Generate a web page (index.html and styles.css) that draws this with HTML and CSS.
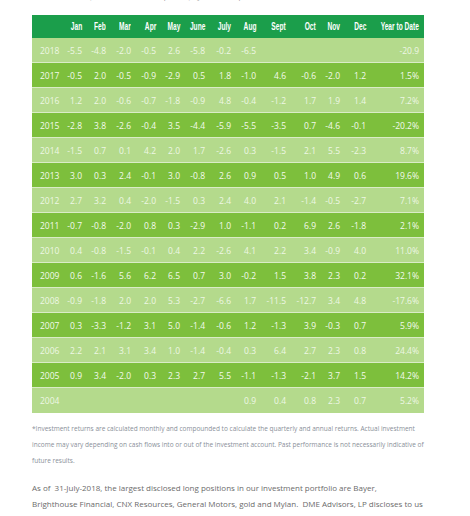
FILE: index.html
```html
<!DOCTYPE html>
<html lang="en">
<head>
  <meta charset="UTF-8" />
  <meta name="viewport" content="width=device-width, initial-scale=1.0"/>
  <title>Monthly Returns</title>
  <link rel="stylesheet" href="styles.css">
</head>
<body>

  <div class="page">
    <p class="intro">Returns (net of all fees and expenses) by month, in percent</p>

    <table class="returns">
      <colgroup>
        <col class="c-year"><col class="c25"><col class="c24"><col class="c25"><col class="c25"><col class="c24"><col class="c25"><col class="c26"><col class="c25"><col class="c30"><col class="c30"><col class="c24"><col class="c26"><col class="c-ytd">
      </colgroup>
      <thead>
        <tr>
          <th></th>
          <th><span>Jan</span></th><th><span>Feb</span></th><th><span>Mar</span></th><th><span>Apr</span></th>
          <th><span>May</span></th><th><span>June</span></th><th><span>July</span></th><th><span>Aug</span></th>
          <th><span>Sept</span></th><th><span>Oct</span></th><th><span>Nov</span></th><th><span>Dec</span></th>
          <th><span>Year to Date</span></th>
        </tr>
      </thead>
      <tbody>
        <tr><td>2018</td><td>-5.5</td><td>-4.8</td><td>-2.0</td><td>-0.5</td><td>2.6</td><td>-5.8</td><td>-0.2</td><td>-6.5</td><td></td><td></td><td></td><td></td><td>-20.9</td></tr>
        <tr><td>2017</td><td>-0.5</td><td>2.0</td><td>-0.5</td><td>-0.9</td><td>-2.9</td><td>0.5</td><td>1.8</td><td>-1.0</td><td>4.6</td><td>-0.6</td><td>-2.0</td><td>1.2</td><td>1.5%</td></tr>
        <tr><td>2016</td><td>1.2</td><td>2.0</td><td>-0.6</td><td>-0.7</td><td>-1.8</td><td>-0.9</td><td>4.8</td><td>-0.4</td><td>-1.2</td><td>1.7</td><td>1.9</td><td>1.4</td><td>7.2%</td></tr>
        <tr><td>2015</td><td>-2.8</td><td>3.8</td><td>-2.6</td><td>-0.4</td><td>3.5</td><td>-4.4</td><td>-5.9</td><td>-5.5</td><td>-3.5</td><td>0.7</td><td>-4.6</td><td>-0.1</td><td>-20.2%</td></tr>
        <tr><td>2014</td><td>-1.5</td><td>0.7</td><td>0.1</td><td>4.2</td><td>2.0</td><td>1.7</td><td>-2.6</td><td>0.3</td><td>-1.5</td><td>2.1</td><td>5.5</td><td>-2.3</td><td>8.7%</td></tr>
        <tr><td>2013</td><td>3.0</td><td>0.3</td><td>2.4</td><td>-0.1</td><td>3.0</td><td>-0.8</td><td>2.6</td><td>0.9</td><td>0.5</td><td>1.0</td><td>4.9</td><td>0.6</td><td>19.6%</td></tr>
        <tr><td>2012</td><td>2.7</td><td>3.2</td><td>0.4</td><td>-2.0</td><td>-1.5</td><td>0.3</td><td>2.4</td><td>4.0</td><td>2.1</td><td>-1.4</td><td>-0.5</td><td>-2.7</td><td>7.1%</td></tr>
        <tr><td>2011</td><td>-0.7</td><td>-0.8</td><td>-2.0</td><td>0.8</td><td>0.3</td><td>-2.9</td><td>1.0</td><td>-1.1</td><td>0.2</td><td>6.9</td><td>2.6</td><td>-1.8</td><td>2.1%</td></tr>
        <tr><td>2010</td><td>0.4</td><td>-0.8</td><td>-1.5</td><td>-0.1</td><td>0.4</td><td>2.2</td><td>-2.6</td><td>4.1</td><td>2.2</td><td>3.4</td><td>-0.9</td><td>4.0</td><td>11.0%</td></tr>
        <tr><td>2009</td><td>0.6</td><td>-1.6</td><td>5.6</td><td>6.2</td><td>6.5</td><td>0.7</td><td>3.0</td><td>-0.2</td><td>1.5</td><td>3.8</td><td>2.3</td><td>0.2</td><td>32.1%</td></tr>
        <tr><td>2008</td><td>-0.9</td><td>-1.8</td><td>2.0</td><td>2.0</td><td>5.3</td><td>-2.7</td><td>-6.6</td><td>1.7</td><td>-11.5</td><td>-12.7</td><td>3.4</td><td>4.8</td><td>-17.6%</td></tr>
        <tr><td>2007</td><td>0.3</td><td>-3.3</td><td>-1.2</td><td>3.1</td><td>5.0</td><td>-1.4</td><td>-0.6</td><td>1.2</td><td>-1.3</td><td>3.9</td><td>-0.3</td><td>0.7</td><td>5.9%</td></tr>
        <tr><td>2006</td><td>2.2</td><td>2.1</td><td>3.1</td><td>3.4</td><td>1.0</td><td>-1.4</td><td>-0.4</td><td>0.3</td><td>6.4</td><td>2.7</td><td>2.3</td><td>0.8</td><td>24.4%</td></tr>
        <tr><td>2005</td><td>0.9</td><td>3.4</td><td>-2.0</td><td>0.3</td><td>2.3</td><td>2.7</td><td>5.5</td><td>-1.1</td><td>-1.3</td><td>-2.1</td><td>3.7</td><td>1.5</td><td>14.2%</td></tr>
        <tr><td>2004</td><td></td><td></td><td></td><td></td><td></td><td></td><td></td><td>0.9</td><td>0.4</td><td>0.8</td><td>2.3</td><td>0.7</td><td>5.2%</td></tr>
      </tbody>
    </table>

    <p class="note">*Investment returns are calculated monthly and compounded to calculate the quarterly and annual returns. Actual investment income may vary depending on cash flows into or out of the investment account. Past performance is not necessarily indicative of future results.</p>

    <p class="holdings">As of &nbsp;31-July-2018, the largest disclosed long positions in our investment portfolio are Bayer,<br>Brighthouse Financial, CNX Resources, General Motors, gold and Mylan. &nbsp;DME Advisors, LP discloses to us</p>
  </div>

</body>
</html>
```

FILE: styles.css
```css
body {
  margin: 0;
  font-family: 'Open Sans', sans-serif;
  background: #fff;
  color: #666;
  overflow: hidden;
}

.page {
  width: 392px;
  padding-left: 32px;
}

.intro {
  margin: -9px 0 0 28px;
  height: 11px;
  font-size: 7.5px;
  line-height: 11px;
  color: #999;
}

.returns {
  margin-top: 13px;
  width: 392px;
  table-layout: fixed;
  border-collapse: collapse;
  font-size: 8.5px;
}

.c-year { width: 30px; }
.c24 { width: 24px; }
.c25 { width: 25px; }
.c26 { width: 26px; }
.c30 { width: 30px; }
.c-ytd { width: 53px; }

.returns th {
  background: #1b9e4b;
  color: #fff;
  height: 23px;
  padding: 0 5px 0 0;
  text-align: right;
  white-space: nowrap;
  font-family: 'Liberation Sans', sans-serif;
  font-weight: bold;
  font-size: 10px;
}

/* condensed headline look */
.returns th span {
  display: inline-block;
  margin-left: -40px;
  transform: scale(0.66, 1.05);
  transform-origin: right center;
}

.returns td {
  height: 24px;
  padding: 0 5px 0 0;
  text-align: right;
  white-space: nowrap;
  color: #f4faee;
  border-bottom: 1px solid #d9ecc6;
}

.returns td:first-child {
  text-align: left;
  padding-left: 8px;
}

.returns tbody tr:nth-child(odd) td {
  background: #b4da8c;
  color: #eef7e4;
}

.returns tbody tr:nth-child(even) td {
  background: #7dbf3c;
}

.returns tbody tr:last-child td {
  border-bottom: none;
  height: 25px;
}

.note {
  margin: 8px 0 0;
  font-size: 6.5px;
  line-height: 16px;
  color: #8a8f99;
}

.holdings {
  margin: 11px 0 0;
  width: 400px;
  font-size: 8px;
  line-height: 16px;
  color: #6b6b6b;
}
```
